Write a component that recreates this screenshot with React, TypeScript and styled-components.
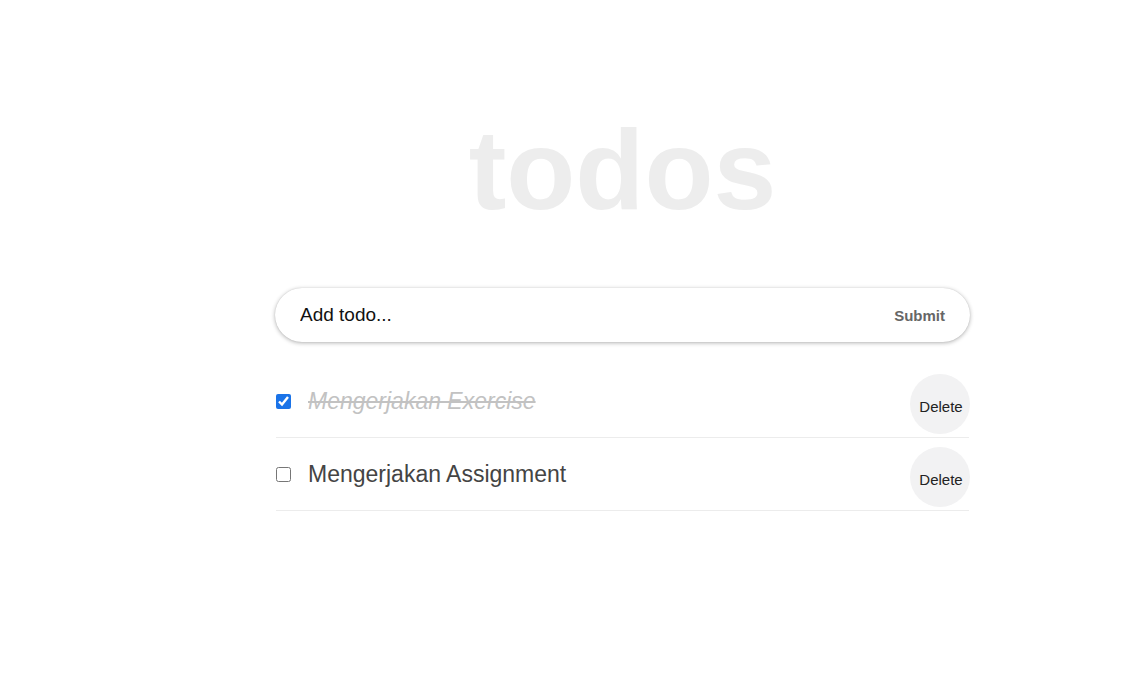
import React, { useState } from "react";
import styled, { createGlobalStyle } from "styled-components";

const GlobalStyle = createGlobalStyle`
  html, body { margin: 0; padding: 0; background: #ffffff; }
  body { font-family: "Liberation Sans", Arial, Helvetica, sans-serif; color: #333; }
  * { box-sizing: border-box; }
`;

const Page = styled.main`
  width: 695px;
  margin-left: 275px;
  padding-top: 113px;
`;

const Title = styled.h1`
  margin: 0;
  height: 115px;
  font-size: 113px;
  line-height: 115px;
  font-weight: 700;
  color: #ededed;
  text-align: center;
  letter-spacing: 0;
  padding-left: 0;
`;

const Form = styled.form`
  margin-top: 60px;
  height: 54px;
  border-radius: 27px;
  background: #fff;
  box-shadow: 0 1px 4px rgba(0, 0, 0, 0.3), 0 0 1px rgba(0, 0, 0, 0.15);
  display: flex;
  align-items: center;
  padding: 0 25px 0 25px;
`;

const Input = styled.input`
  flex: 1;
  border: none;
  outline: none;
  background: transparent;
  font-family: inherit;
  font-size: 19px;
  color: #111;
  padding: 0;
  &::placeholder { color: #111; opacity: 1; }
`;

const SubmitButton = styled.button`
  border: none;
  background: transparent;
  font-family: inherit;
  font-size: 15px;
  font-weight: 700;
  color: #666;
  padding: 0;
  cursor: pointer;
`;

const List = styled.ul`
  list-style: none;
  margin: 23px 1px 0 1px;
  padding: 0;
`;

const Row = styled.li`
  height: 73px;
  display: flex;
  align-items: center;
  border-bottom: 1px solid #ececec;
`;

const Label = styled.label`
  flex: 1;
  display: flex;
  align-items: center;
  gap: 17px;
`;

const Check = styled.input`
  width: 15px;
  height: 15px;
  margin: 0;
  accent-color: #1a73e8;
`;

const Text = styled.span<{ $done: boolean }>`
  font-size: 23px;
  color: ${(p) => (p.$done ? "#c2c2c2" : "#444")};
  font-style: ${(p) => (p.$done ? "italic" : "normal")};
  text-decoration: ${(p) => (p.$done ? "line-through" : "none")};
`;

const DeleteButton = styled.button`
  align-self: flex-end;
  margin-bottom: 3px;
  width: 60px;
  height: 60px;
  border-radius: 50%;
  border: none;
  background: #f2f2f3;
  font-family: inherit;
  font-size: 15px;
  line-height: 1;
  color: #222;
  padding: 4px 0 0 2px;
  margin-right: -1px;
  cursor: pointer;
`;

type Todo = { id: number; text: string; done: boolean };

export default function App() {
  const [todos, setTodos] = useState<Todo[]>([
    { id: 1, text: "Mengerjakan Exercise", done: true },
    { id: 2, text: "Mengerjakan Assignment", done: false },
  ]);
  const [value, setValue] = useState("");

  return (
    <>
      <GlobalStyle />
      <Page>
        <Title>todos</Title>
        <Form
          onSubmit={(e) => {
            e.preventDefault();
            if (!value.trim()) return;
            setTodos([...todos, { id: Date.now(), text: value, done: false }]);
            setValue("");
          }}
        >
          <Input
            placeholder="Add todo..."
            value={value}
            onChange={(e) => setValue(e.target.value)}
          />
          <SubmitButton type="submit">Submit</SubmitButton>
        </Form>
        <List>
          {todos.map((t) => (
            <Row key={t.id}>
              <Label>
                <Check
                  type="checkbox"
                  checked={t.done}
                  onChange={() =>
                    setTodos(todos.map((x) => (x.id === t.id ? { ...x, done: !x.done } : x)))
                  }
                />
                <Text $done={t.done}>{t.text}</Text>
              </Label>
              <DeleteButton onClick={() => setTodos(todos.filter((x) => x.id !== t.id))}>
                Delete
              </DeleteButton>
            </Row>
          ))}
        </List>
      </Page>
    </>
  );
}
